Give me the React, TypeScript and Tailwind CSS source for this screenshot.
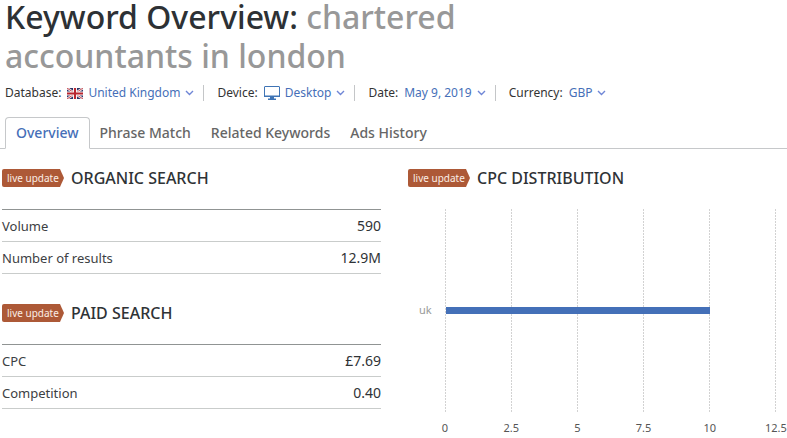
import type { ReactNode } from "react"

interface FilterProps {
  id: string
  label: string
  value: string
  icon?: ReactNode
}

interface Metric {
  name: string
  value: string
}

const tabs = ["Overview", "Phrase Match", "Related Keywords", "Ads History"]

const organic: Metric[] = [
  { name: "Volume", value: "590" },
  { name: "Number of results", value: "12.9M" },
]

const paid: Metric[] = [
  { name: "CPC", value: "£7.69" },
  { name: "Competition", value: "0.40" },
]

const ticks = [0, 2.5, 5, 7.5, 10, 12.5]
const cpc = { country: "uk", value: 10 }

function FlagIcon() {
  return (
    <svg width="16" height="11" viewBox="0 0 16 11" aria-hidden="true">
      <rect width="16" height="11" fill="#2b3467" />
      <path d="M0 0L16 11M16 0L0 11" stroke="#f3eef0" strokeWidth="2.4" />
      <path d="M0 0L16 11M16 0L0 11" stroke="#c4343c" strokeWidth="0.9" />
      <path d="M8 0V11M0 5.5H16" stroke="#f6f2f2" strokeWidth="4" />
      <path d="M8 0V11M0 5.5H16" stroke="#b9252f" strokeWidth="2" />
    </svg>
  )
}

function MonitorIcon() {
  return (
    <svg width="16" height="14" viewBox="0 0 16 14" aria-hidden="true">
      <rect x="0.5" y="0.5" width="15" height="10" rx="0.5" fill="#fff" stroke="#3f74b5" />
      <path d="M0 9.5H16V11H0Z" fill="#3f74b5" />
      <path d="M6 11H10V12.5H12V14H4V12.5H6Z" fill="#3f74b5" />
    </svg>
  )
}

function Chevron() {
  return (
    <svg width="9" height="6" viewBox="0 0 9 6" aria-hidden="true">
      <path d="M1 1L4.5 4.5L8 1" fill="none" stroke="#6f86d6" strokeWidth="1.4" />
    </svg>
  )
}

function Filter({ id, label, value, icon }: FilterProps) {
  return (
    <div className="flex items-center gap-1.5 border-l border-[#c4c6c8] pr-[9px] pl-[13px] leading-4 first:border-l-0 first:pl-0">
      <span id={id} className="text-[#333]">
        {label}
      </span>
      <button
        type="button"
        aria-labelledby={`${id} ${id}-value`}
        className="flex items-center gap-[5px] text-[#466fb8]"
      >
        {icon}
        <span id={`${id}-value`}>{value}</span>
        <Chevron />
      </button>
    </div>
  )
}

function SectionTitle({ children }: { children: ReactNode }) {
  return (
    <div className="flex h-[18px] items-center gap-[7px]">
      <span className="flex h-[18px] w-[62px] items-center rounded-l-xs bg-[#ad5937] pl-[5px] text-[10px] whitespace-nowrap text-[#fbeee6] [clip-path:polygon(0_0,58px_0,100%_50%,58px_100%,0_100%)]">
        live update
      </span>
      <h2 className="text-base font-medium text-[#2f3336]">{children}</h2>
    </div>
  )
}

function MetricsTable({ title, metrics }: { title: string; metrics: Metric[] }) {
  return (
    <section>
      <SectionTitle>{title}</SectionTitle>
      <table className="mt-[22px] w-full border-t border-[#909493]">
        <tbody>
          {metrics.map((metric) => (
            <tr key={metric.name} className="h-8 border-b border-[#c9cccb]">
              <th scope="row" className="text-left text-[13px] leading-5 font-normal text-[#3c4043]">
                {metric.name}
              </th>
              <td className="text-right text-sm text-[#2f3336]">{metric.value}</td>
            </tr>
          ))}
        </tbody>
      </table>
    </section>
  )
}

function CpcChart() {
  const width = `${(cpc.value / ticks[ticks.length - 1]) * 100}%`

  return (
    <div className="mt-[22px] flex">
      <div className="flex h-[203px] w-[37px] items-center pl-[11px] text-[11px] text-[#999]">
        {cpc.country}
      </div>
      <div className="mr-[11px] flex-1">
        <div className="relative flex h-[203px] justify-between">
          {ticks.map((tick) => (
            <div
              key={tick}
              className="w-px bg-[repeating-linear-gradient(#d2d2d2_0_2px,transparent_2px_3px)]"
            />
          ))}
          <div className="absolute inset-0 flex items-center pl-px">
            <div className="h-[7px] bg-[#4470b8]" style={{ width }} />
          </div>
        </div>
        <div className="mt-2 flex justify-between text-[11px] leading-4 text-[#555]">
          {ticks.map((tick) => (
            <span key={tick} className="flex w-0 justify-center">
              {tick}
            </span>
          ))}
        </div>
      </div>
    </div>
  )
}

export default function App() {
  return (
    <main className="bg-white font-['Noto_Sans','Open_Sans',sans-serif]">
      <h1 className="-mt-[3px] max-w-[500px] pl-[5px] text-[32px] leading-[39px] font-medium text-[#2d3135]">
        Keyword Overview: <span className="text-[#989898]">chartered accountants in london</span>
      </h1>

      <div className="mt-2.5 flex pl-[5px] text-xs">
        <Filter id="database" label="Database:" value="United Kingdom" icon={<FlagIcon />} />
        <Filter id="device" label="Device:" value="Desktop" icon={<MonitorIcon />} />
        <Filter id="date" label="Date:" value="May 9, 2019" />
        <Filter id="currency" label="Currency:" value="GBP" />
      </div>

      <nav className="mt-4 flex border-b border-[#c6c8ca] pl-[5px] text-sm font-medium">
        {tabs.map((tab, i) => (
          <a
            key={tab}
            href="#"
            aria-current={i === 0 ? "page" : undefined}
            className={
              i === 0
                ? "-mb-px h-8 rounded-t border border-b-white border-[#c6c8ca] bg-white px-2.5 leading-[30px] text-[#466fb8]"
                : "px-2.5 leading-[31px] text-[#666]"
            }
          >
            {tab}
          </a>
        ))}
      </nav>

      <div className="mt-5 grid grid-cols-2 gap-[27px] pl-0.5">
        <div className="flex flex-col gap-[30px]">
          <MetricsTable title="ORGANIC SEARCH" metrics={organic} />
          <MetricsTable title="PAID SEARCH" metrics={paid} />
        </div>
        <section>
          <SectionTitle>CPC DISTRIBUTION</SectionTitle>
          <CpcChart />
        </section>
      </div>
    </main>
  )
}
